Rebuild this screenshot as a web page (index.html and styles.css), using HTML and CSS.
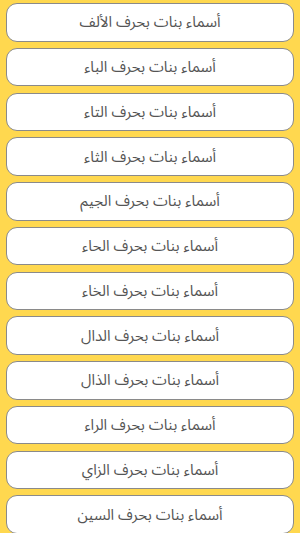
FILE: index.html
```html
<!DOCTYPE html>
<html lang="ar" dir="rtl">

<head>
    <meta charset="UTF-8">
    <meta name="viewport" content="width=device-width, initial-scale=1.0">
    <title>أسماء بنات</title>
    <link rel="stylesheet" href="styles.css">
</head>

<body>
    <div class="letters-list">
        <button class="letter-btn">أسماء بنات بحرف الألف</button>
        <button class="letter-btn">أسماء بنات بحرف الباء</button>
        <button class="letter-btn">أسماء بنات بحرف التاء</button>
        <button class="letter-btn">أسماء بنات بحرف الثاء</button>
        <button class="letter-btn">أسماء بنات بحرف الجيم</button>
        <button class="letter-btn">أسماء بنات بحرف الحاء</button>
        <button class="letter-btn">أسماء بنات بحرف الخاء</button>
        <button class="letter-btn">أسماء بنات بحرف الدال</button>
        <button class="letter-btn">أسماء بنات بحرف الذال</button>
        <button class="letter-btn">أسماء بنات بحرف الراء</button>
        <button class="letter-btn">أسماء بنات بحرف الزاي</button>
        <button class="letter-btn">أسماء بنات بحرف السين</button>
    </div>
</body>

</html>
```

FILE: styles.css
```css
html,
body {
    margin: 0;
    background-color: #ffd84f;
}

body {
    font-family: "Noto Sans Arabic", "DejaVu Sans", sans-serif;
    overflow: hidden;
}

.letters-list {
    display: flex;
    flex-direction: column;
    gap: 6.26px;
    padding: 3px 6px 0 6px;
}

.letter-btn {
    box-sizing: border-box;
    height: 38.5px;
    width: 100%;
    background-color: #fff;
    border: 1.3px solid #8a8a8a;
    border-radius: 11px;
    color: #555;
    font-family: inherit;
    font-size: 15px;
    text-align: center;
    padding: 0;
    flex-shrink: 0;
}
```
